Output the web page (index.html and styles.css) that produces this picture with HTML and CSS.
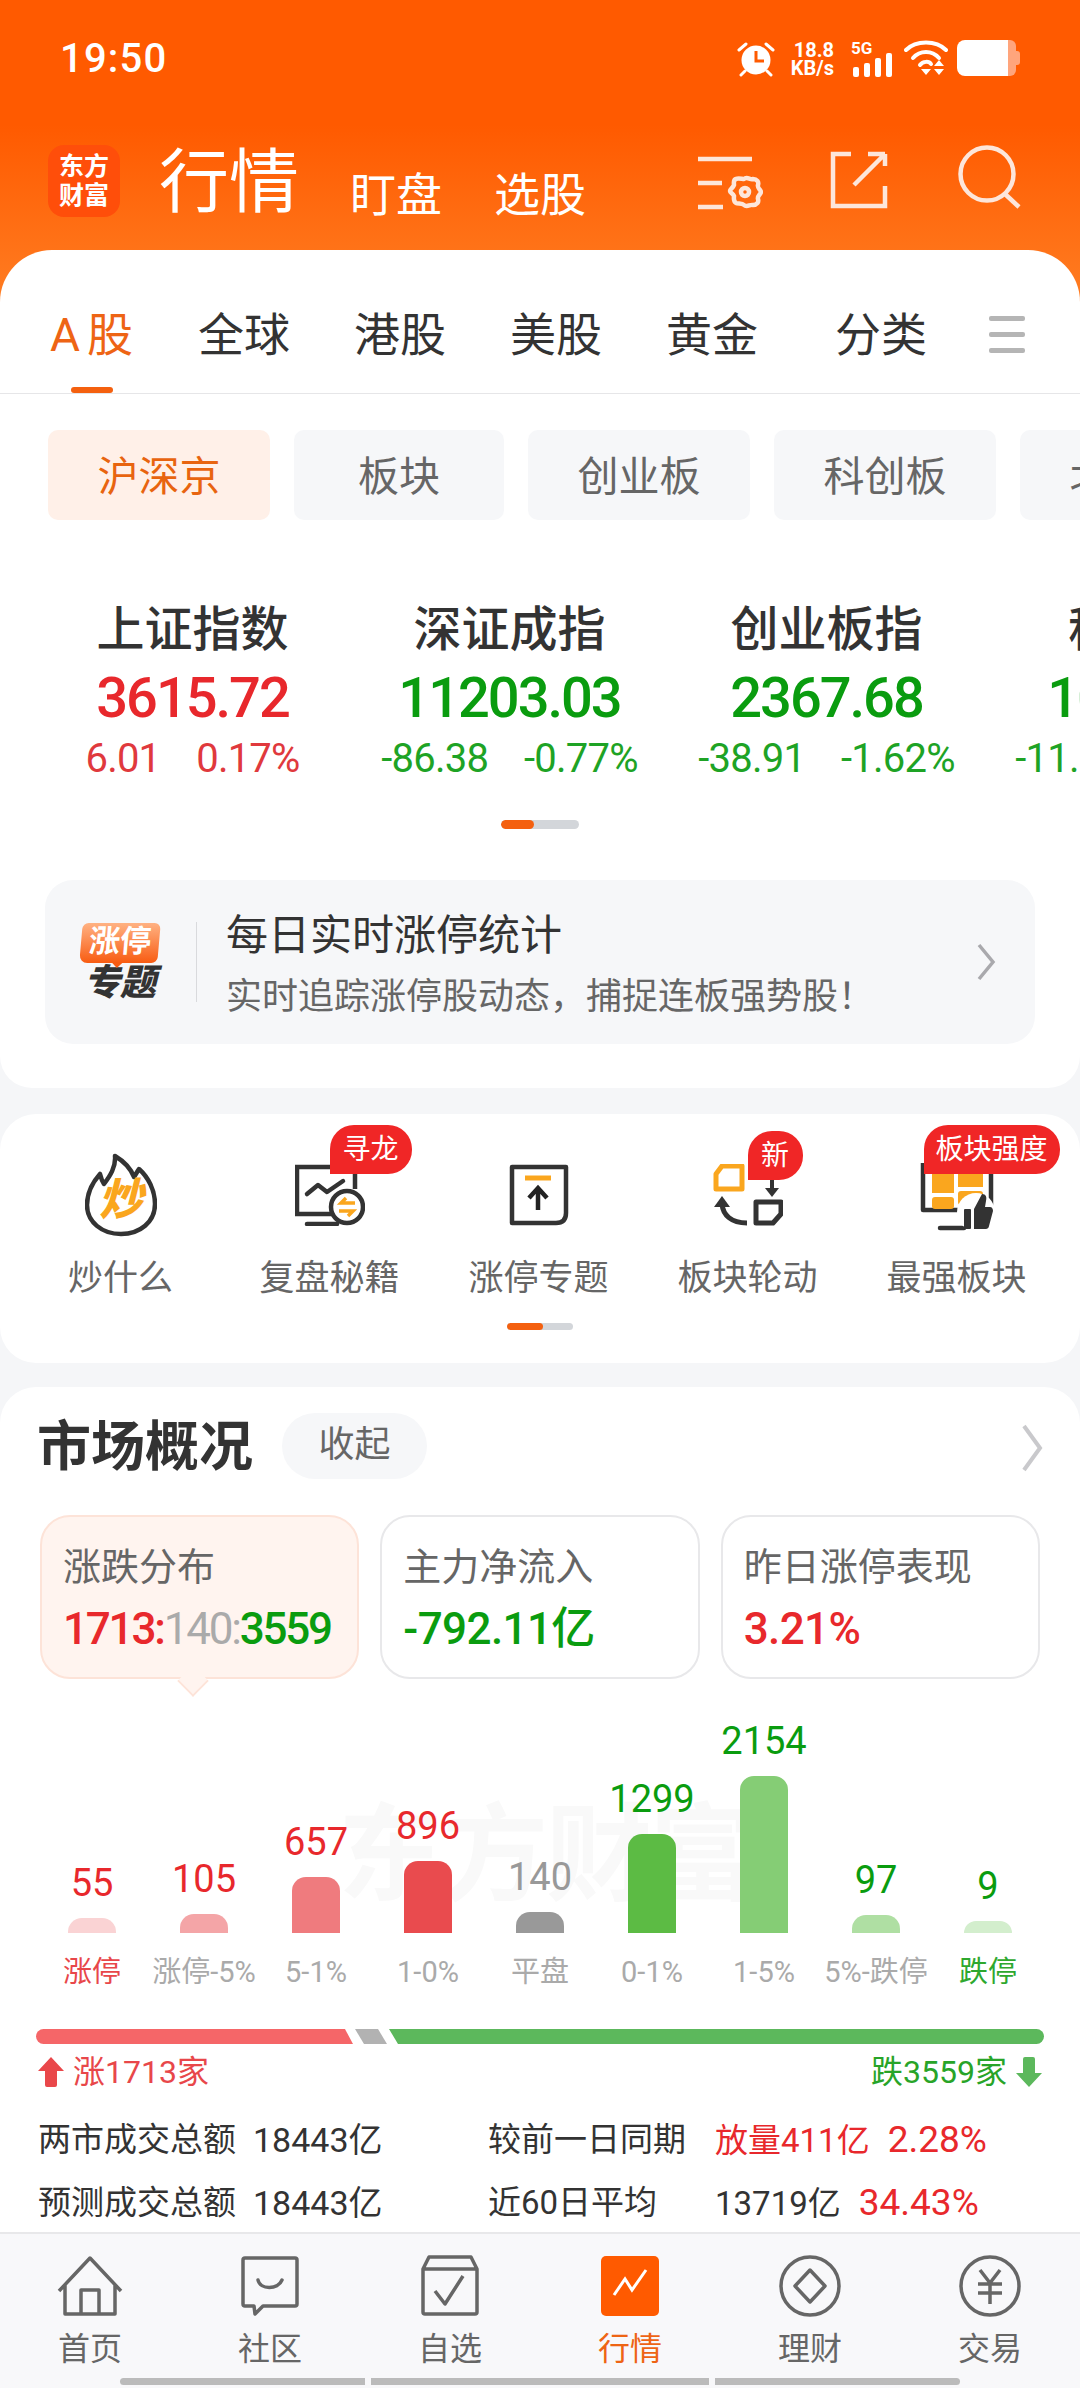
FILE: index.html

```html
<!DOCTYPE html>
<html lang="zh-CN">
<head>
  <meta charset="UTF-8">
  <title>行情</title>
  <link rel="stylesheet" href="styles.css">
</head>
<body>
<div class="app">
  <div class="main">
    <header class="head">
      <div class="status">
        <span class="time">19:50</span>
        <div class="status-right">
          <svg class="ic-alarm" width="38" height="36" viewBox="0 0 38 36">
            <circle cx="19" cy="19" r="14.5" fill="#fff"/>
            <path d="M19 10v10h8" fill="none" stroke="#ff5a00" stroke-width="3"/>
            <path d="M2 9l7-6M36 9l-7-6M8 30l-4 4M30 30l4 4" stroke="#fff" stroke-width="3" stroke-linecap="round"/>
          </svg>
          <div class="speed"><span>18.8</span><span>KB/s</span></div>
          <div class="signal">
            <span class="five-g">5G</span>
            <svg width="42" height="24" viewBox="0 0 42 24" fill="#fff">
              <rect x="0" y="14" width="6" height="10" rx="2"/>
              <rect x="11" y="10" width="6" height="14" rx="2"/>
              <rect x="22" y="5" width="6" height="19" rx="2"/>
              <rect x="33" y="0" width="6" height="24" rx="2"/>
            </svg>
          </div>
          <svg width="44" height="36" viewBox="0 0 44 36" fill="none">
            <path d="M2 10C12 0 32 0 42 10" stroke="#fff" stroke-width="4" stroke-linecap="round"/>
            <path d="M9 18C16 10 28 10 35 18" stroke="#fff" stroke-width="4" stroke-linecap="round"/>
            <path d="M16 25C19 21 25 21 27 24" stroke="#fff" stroke-width="4" stroke-linecap="round"/>
            <path d="M17 29h10l-5 6zM35 20l5 6h-10zM30 29h10l-5 6z" fill="#fff"/>
          </svg>
          <div class="battery"><span class="battery-fill"></span><span class="battery-rest"></span><span class="battery-nub"></span></div>
        </div>
      </div>
      <div class="toolbar">
        <div class="logo"><span>东方</span><span>财富</span></div>
        <span class="title">行情</span>
        <span class="subtitle">盯盘</span>
        <span class="subtitle">选股</span>
        <div class="tools">
          <svg class="tool-set" width="66" height="58" viewBox="0 0 66 58" fill="none" stroke="#fde6da" stroke-width="4.5">
            <path d="M1 4h54M1 28h24M1 52h25"/>
            <path d="M47 24c3-3 6 1 9 0 4 0 6 3 5 6-1 3 3 5 3 7s-4 4-3 7c1 3-1 6-5 6-3-1-6 3-9 0-2-2-6-1-8-2-3-2-2-5-2-7-1-3-4-3-4-5s3-3 4-6c0-2-1-5 2-6 2-1 6 0 8 0z" stroke-linejoin="round"/>
            <circle cx="48" cy="37" r="4"/>
          </svg>
          <svg class="tool-share" width="58" height="58" viewBox="0 0 58 58" fill="none" stroke="#fde6da" stroke-width="4.5">
            <path d="M21 3H3v52h52V35M55 3v12M38 3h17M55 3L24 34"/>
          </svg>
          <svg width="64" height="64" viewBox="0 0 64 64" fill="none" stroke="#fde6da" stroke-width="4.5">
            <circle cx="29" cy="29" r="26.5"/>
            <path d="M47 49l14 13"/>
          </svg>
        </div>
      </div>
    </header>

    <section class="panel">
      <nav class="tabs">
        <span class="tab tab-a on">A股</span>
        <span class="tab">全球</span>
        <span class="tab">港股</span>
        <span class="tab">美股</span>
        <span class="tab">黄金</span>
        <span class="tab tab-sort">分类</span>
        <span class="tab-menu"><i></i><i></i><i></i></span>
      </nav>
      <div class="chips">
        <span class="chip on">沪深京</span>
        <span class="chip chip-s">板块</span>
        <span class="chip">创业板</span>
        <span class="chip">科创板</span>
        <span class="chip">北交所</span>
      </div>
      <div class="indexes">
        <div class="index up">
          <div class="index-name">上证指数</div>
          <div class="index-val">3615.72</div>
          <div class="index-sub"><span>6.01</span><span>0.17%</span></div>
        </div>
        <div class="index down">
          <div class="index-name">深证成指</div>
          <div class="index-val">11203.03</div>
          <div class="index-sub"><span>-86.38</span><span>-0.77%</span></div>
        </div>
        <div class="index down">
          <div class="index-name">创业板指</div>
          <div class="index-val">2367.68</div>
          <div class="index-sub"><span>-38.91</span><span>-1.62%</span></div>
        </div>
        <div class="index down">
          <div class="index-name">科创50</div>
          <div class="index-val">1042.36</div>
          <div class="index-sub"><span>-11.25</span><span>-1.07%</span></div>
        </div>
      </div>
      <div class="dots dots-index"><i></i></div>
      <div class="banner">
        <div class="banner-logo">
          <span class="banner-tag">涨停</span>
          <span class="banner-word">专题</span>
        </div>
        <div class="banner-text">
          <div class="banner-title">每日实时涨停统计</div>
          <div class="banner-sub">实时追踪涨停股动态，捕捉连板强势股！</div>
        </div>
        <svg class="banner-arrow" width="20" height="40" viewBox="0 0 20 40" fill="none" stroke="#a9a9ad" stroke-width="3.5"><path d="M3 3l14 17L3 37"/></svg>
      </div>
    </section>

    <section class="card shortcuts">
      <div class="grid5">
        <div class="short">
          <div class="short-ic">
            <svg width="72" height="84" viewBox="0 0 72 84" fill="none" stroke="#333" stroke-width="4.5" stroke-linejoin="round">
              <path d="M30 3c10 6 16 13 19 21 2-3 3-5 5-8 9 8 16 21 16 35 0 18-15 30-34 30S2 69 2 52c0-11 5-22 13-31 1 4 2 7 4 10 6-8 12-17 11-28z"/>
            </svg>
            <span class="chao">炒</span>
          </div>
          <span class="short-name">炒什么</span>
        </div>
        <div class="short">
          <div class="short-ic">
            <svg width="70" height="62" viewBox="0 0 70 62" fill="none">
              <path d="M40 3H2v47h38M60 3v22" stroke="#333" stroke-width="4.5"/>
              <path d="M12 60h30" stroke="#333" stroke-width="4.5" stroke-linecap="round"/>
              <path d="M12 30l11-9 9 7 16-11" stroke="#333" stroke-width="4.5" stroke-linecap="round" stroke-linejoin="round"/>
              <circle cx="52" cy="43" r="16" fill="#fff" stroke="#333" stroke-width="4.5"/>
              <path d="M60 39H46l5-5M44 47h14l-5 5" stroke="#faa61e" stroke-width="3.5"/>
            </svg>
            <span class="badge badge-long">寻龙</span>
          </div>
          <span class="short-name">复盘秘籍</span>
        </div>
        <div class="short">
          <div class="short-ic">
            <svg width="60" height="62" viewBox="0 0 60 62" fill="none">
              <path d="M3 3h54v46q0 10-10 10H3z" stroke="#333" stroke-width="4.5" stroke-linejoin="round"/>
              <path d="M16 14h26" stroke="#faa61e" stroke-width="5"/>
              <path d="M29 46V26M20 34l9-10 9 10" stroke="#222" stroke-width="4.5"/>
            </svg>
          </div>
          <span class="short-name">涨停专题</span>
        </div>
        <div class="short">
          <div class="short-ic">
            <svg width="70" height="62" viewBox="0 0 70 62" fill="none">
              <path d="M3 25V10l6-8h20v23z" stroke="#faa61e" stroke-width="5" stroke-linejoin="round"/>
              <path d="M43 38h25v12l-8 9H43z" stroke="#333" stroke-width="5" stroke-linejoin="round"/>
              <path d="M59 16v10" stroke="#333" stroke-width="4"/>
              <path d="M52 24h14l-7 9z" fill="#333"/>
              <path d="M9 40c1 11 9 19 25 19" stroke="#333" stroke-width="5"/>
              <path d="M1 43l8-11 8 11z" fill="#333"/>
            </svg>
            <span class="badge badge-new">新</span>
          </div>
          <span class="short-name">板块轮动</span>
        </div>
        <div class="short">
          <div class="short-ic">
            <svg width="74" height="72" viewBox="0 0 74 72" fill="none">
              <path d="M3 4v47h68V4" stroke="#333" stroke-width="4.5" stroke-linejoin="round"/>
              <path d="M20 69h24" stroke="#333" stroke-width="4.5" stroke-linecap="round"/>
              <rect x="12" y="14" width="22" height="20" fill="#faa61e"/>
              <rect x="38" y="14" width="25" height="14" fill="#faa61e"/>
              <rect x="12" y="38" width="22" height="12" rx="3" fill="#faa61e"/>
              <rect x="38" y="32" width="25" height="14" rx="3" fill="#faa61e"/>
              <circle cx="56" cy="53" r="19" fill="#fff"/>
              <rect x="44" y="50" width="7" height="20" rx="1" fill="#333"/>
              <path d="M54 50l8-15c4 0 5 3 4 7l-1 6h5c2 0 3 2 3 4l-4 15c0 2-2 3-3 3H54z" fill="#333"/>
            </svg>
            <span class="badge badge-wide">板块强度</span>
          </div>
          <span class="short-name">最强板块</span>
        </div>
      </div>
      <div class="dots dots-short"><i></i></div>
    </section>

    <section class="card market">
      <div class="market-head">
        <h2 class="market-title">市场概况</h2>
        <span class="fold">收起</span>
        <svg class="market-arrow" width="22" height="50" viewBox="0 0 22 50" fill="none" stroke="#c9c9cc" stroke-width="4"><path d="M3 3l16 22L3 47"/></svg>
      </div>
      <div class="stats">
        <div class="stat on">
          <div class="stat-name">涨跌分布</div>
          <div class="stat-val stat-mix"><span class="red">1713:</span><span class="gray">140:</span><span class="green">3559</span></div>
        </div>
        <div class="stat">
          <div class="stat-name">主力净流入</div>
          <div class="stat-val green">-792.11亿</div>
        </div>
        <div class="stat">
          <div class="stat-name">昨日涨停表现</div>
          <div class="stat-val red">3.21%</div>
        </div>
      </div>

      <div class="chart">
        <span class="watermark">东方财富</span>
        <div class="col"><span class="col-val red">55</span><div class="bar" style="height:15px;background:#fad3d4"></div><span class="col-name red2">涨停</span></div>
        <div class="col"><span class="col-val red">105</span><div class="bar" style="height:19px;background:#f4a5a7"></div><span class="col-name">涨停-5%</span></div>
        <div class="col"><span class="col-val red">657</span><div class="bar" style="height:56px;background:#ef7b7e"></div><span class="col-name">5-1%</span></div>
        <div class="col"><span class="col-val red">896</span><div class="bar" style="height:72px;background:#e94b4e"></div><span class="col-name">1-0%</span></div>
        <div class="col"><span class="col-val gray">140</span><div class="bar" style="height:21px;background:#999"></div><span class="col-name">平盘</span></div>
        <div class="col"><span class="col-val green">1299</span><div class="bar" style="height:99px;background:#5cbb44"></div><span class="col-name">0-1%</span></div>
        <div class="col"><span class="col-val green">2154</span><div class="bar" style="height:157px;background:#85cd75"></div><span class="col-name">1-5%</span></div>
        <div class="col"><span class="col-val green">97</span><div class="bar" style="height:18px;background:#afdfa3"></div><span class="col-name">5%-跌停</span></div>
        <div class="col"><span class="col-val green">9</span><div class="bar" style="height:12px;background:#d3eecd"></div><span class="col-name green2">跌停</span></div>
      </div>

      <div class="ratio">
        <i class="ratio-up"></i><i class="ratio-flat"></i><i class="ratio-down"></i>
      </div>
      <div class="ratio-text">
        <span class="ratio-l red">
          <svg width="26" height="30" viewBox="0 0 26 30" fill="#e9474a"><path d="M13 0l13 14h-7v14a2 2 0 0 1-2 2H9a2 2 0 0 1-2-2V14H0z"/></svg>
          涨1713家
        </span>
        <span class="ratio-r green">
          跌3559家
          <svg width="26" height="30" viewBox="0 0 26 30" fill="#5cb85c"><path d="M13 30l13-14h-7V2a2 2 0 0 0-2-2H9a2 2 0 0 0-2 2v14H0z"/></svg>
        </span>
      </div>
      <div class="turnover">
        <span>两市成交总额</span><span>18443亿</span><span>较前一日同期</span><span class="red turn-pair"><b>放量411亿</b><b>2.28%</b></span>
        <span>预测成交总额</span><span>18443亿</span><span>近60日平均</span><span class="turn-pair"><b>13719亿</b><b class="red">34.43%</b></span>
      </div>
    </section>
  </div>

  <footer class="nav">
    <div class="nav-row">
      <div class="nav-item">
        <svg width="66" height="62" viewBox="0 0 66 62" fill="none" stroke="#666" stroke-width="3.5" stroke-linejoin="round"><path d="M2 36L33 3l31 33M8 30v29h50V30M24 59V35h18v24"/></svg>
        <span>首页</span>
      </div>
      <div class="nav-item">
        <svg width="60" height="62" viewBox="0 0 60 62" fill="none" stroke="#666" stroke-width="3.5" stroke-linejoin="round"><path d="M5 3h50a2 2 0 0 1 2 2v44a2 2 0 0 1-2 2H23l-8 8-1-8H5a2 2 0 0 1-2-2V5a2 2 0 0 1 2-2z"/><path d="M18 25c2 10 20 10 24 0" stroke-linecap="round"/></svg>
        <span>社区</span>
      </div>
      <div class="nav-item">
        <svg width="60" height="62" viewBox="0 0 60 62" fill="none" stroke="#666" stroke-width="3.5" stroke-linejoin="round"><path d="M3 14L9 2h42l6 12v43a2 2 0 0 1-2 2H5a2 2 0 0 1-2-2zM3 14h54M15 36l10 13 18-28"/></svg>
        <span>自选</span>
      </div>
      <div class="nav-item on">
        <svg width="58" height="62" viewBox="0 0 58 62"><rect width="58" height="60" y="1" rx="5" fill="#ff5a00"/><path d="M13 40l11-16 7 11 14-20" fill="none" stroke="#fff" stroke-width="3"/></svg>
        <span>行情</span>
      </div>
      <div class="nav-item">
        <svg width="62" height="62" viewBox="0 0 62 62" fill="none" stroke="#666" stroke-width="3.5" stroke-linejoin="round"><circle cx="31" cy="31" r="29"/><path d="M31 15l15 16-15 16-15-16z"/></svg>
        <span>理财</span>
      </div>
      <div class="nav-item">
        <svg width="62" height="62" viewBox="0 0 62 62" fill="none" stroke="#666" stroke-width="3.5"><circle cx="31" cy="31" r="29"/><path d="M21 15l10 13 10-13M19 29h24M19 38h24M31 28v21"/></svg>
        <span>交易</span>
      </div>
    </div>
    <div class="home-bars"><i></i><i></i><i></i></div>
  </footer>
</div>
</body>
</html>
```

FILE: styles.css

```css
* {
  box-sizing: border-box;
}
html, body {
  margin: 0;
  padding: 0;
}
body {
  width: 1080px;
  height: 2388px;
  overflow: hidden;
  font-family: Roboto, "Noto Sans CJK SC", sans-serif;
  color: #333;
  background: #f5f6f8;
}
i {
  display: block;
}
.red { color: #e8282c; }
.green { color: #0a9c0f; }
.gray { color: #999; }

.app {
  height: 2388px;
  display: flex;
  flex-direction: column;
}
.main {
  flex: 1;
  min-height: 0;
  overflow: hidden;
}

/* header */
.head {
  height: 302px;
  background: linear-gradient(180deg, #ff5a00 0, #ff5a00 125px, #ff7d22 302px);
  color: #fff;
}
.status {
  height: 116px;
  padding: 40px 60px 0 60px;
  display: flex;
  justify-content: space-between;
  align-items: flex-start;
}
.time {
  font-size: 40px;
  line-height: 38px;
  font-weight: 500;
  letter-spacing: 1.2px;
}
.status-right {
  display: flex;
  align-items: flex-start;
  margin-right: 0;
}
.ic-alarm {
  margin: 1px 13px 0 0;
}
.speed {
  display: flex;
  flex-direction: column;
  align-items: flex-end;
  width: 46px;
  margin-top: 1px;
  font-size: 20px;
  line-height: 18px;
  font-weight: 700;
  white-space: nowrap;
}
.signal {
  width: 42px;
  margin: 1px 11px 0 17px;
  position: relative;
  height: 36px;
}
.five-g {
  position: absolute;
  left: 0;
  top: 0;
  font-size: 17px;
  line-height: 15px;
  font-weight: 700;
}
.signal svg {
  position: absolute;
  left: 2px;
  top: 12px;
}
.battery {
  display: flex;
  align-items: center;
  margin-left: 9px;
  height: 36px;
}
.battery-fill {
  width: 51px;
  height: 36px;
  background: #fff;
  border-radius: 8px 0 0 8px;
}
.battery-rest {
  width: 8px;
  height: 36px;
  background: #ffa57c;
  border-radius: 0 6px 6px 0;
}
.battery-nub {
  width: 4px;
  height: 14px;
  background: #ffa57c;
  border-radius: 0 3px 3px 0;
}

.toolbar {
  display: flex;
  align-items: flex-start;
  padding: 29px 58px 0 48px;
}
.logo {
  width: 72px;
  height: 72px;
  border-radius: 16px;
  background: #ff4e0a;
  display: flex;
  flex-direction: column;
  align-items: center;
  justify-content: center;
  font-size: 25px;
  line-height: 29px;
  font-weight: 700;
}
.title {
  margin-left: 39px;
  font-size: 70px;
  line-height: 76px;
  margin-top: 0;
}
.subtitle {
  font-size: 46px;
  line-height: 54px;
  margin: 23px 0 0 52px;
}
.title + .subtitle {
  margin-left: 51px;
}
.tools {
  margin-left: auto;
  display: flex;
  align-items: flex-start;
}
.tool-set {
  margin: 10px 67px 0 0;
}
.tool-share {
  margin: 6px 70px 0 0;
}

/* main white panel */
.panel {
  margin-top: -52px;
  height: 838px;
  background: #fff;
  border-radius: 52px 52px 32px 32px;
  position: relative;
}
.tabs {
  height: 144px;
  padding: 0 0 0 50px;
  border-bottom: 1px solid #e6e6e8;
  display: flex;
  align-items: flex-start;
}
.tab {
  font-size: 46px;
  line-height: 56px;
  margin: 57px 64px 0 0;
  color: #333;
  position: relative;
  white-space: nowrap;
}
.tab-a {
  width: 84px;
  letter-spacing: 7px;
}
.tab.on {
  color: #ee6414;
}
.tab.on::after {
  content: "";
  position: absolute;
  left: 21px;
  bottom: -30px;
  width: 42px;
  height: 6px;
  border-radius: 3px;
  background: #f4600f;
}
.tab-sort {
  margin-left: 13px;
  margin-right: 62px;
}
.tab-menu {
  margin-top: 66px;
}
.tab-menu i {
  width: 36px;
  height: 5px;
  border-radius: 2px;
  background: #b5b5b5;
  margin-bottom: 11px;
}

.chips {
  display: flex;
  gap: 24px;
  padding: 36px 0 0 48px;
  overflow: hidden;
}
.chip {
  flex: none;
  width: 222px;
  height: 90px;
  line-height: 94px;
  text-align: center;
  background: #f6f7f9;
  border-radius: 10px;
  font-size: 41px;
  color: #666;
}
.chip-s {
  width: 210px;
}
.chip.on {
  background: #fff0e8;
  color: #e8640f;
}

.indexes {
  display: flex;
  padding: 80px 0 0 34px;
  overflow: hidden;
}
.index {
  flex: none;
  width: 317px;
  text-align: center;
  white-space: nowrap;
}
.index-name {
  font-size: 48px;
  line-height: 60px;
  font-weight: 500;
  color: #333;
}
.index-val {
  font-size: 56px;
  line-height: 70px;
  margin-top: 3px;
  font-weight: 500;
  letter-spacing: -2px;
}
.index-sub {
  display: flex;
  justify-content: center;
  gap: 36px;
  font-size: 40px;
  line-height: 46px;
  margin-top: 3px;
  letter-spacing: -0.8px;
}
.up .index-val { color: #e8282c; }
.up .index-sub { color: #e0393d; }
.down .index-val { color: #0a9c0f; }
.down .index-sub { color: #1ea325; }

.dots {
  background: #d3d6da;
  border-radius: 5px;
  overflow: hidden;
}
.dots i {
  height: 100%;
  background: #f4600f;
  border-radius: 5px;
}
.dots-index {
  width: 78px;
  height: 9px;
  margin: 38px 0 0 501px;
}
.dots-index i {
  width: 33px;
}
.dots-short {
  width: 66px;
  height: 7px;
  margin: 20px 0 0 507px;
}
.dots-short i {
  width: 36px;
}

.banner {
  margin: 51px 45px 0;
  height: 164px;
  background: #f6f7f9;
  border-radius: 28px;
  display: flex;
  align-items: center;
  padding-left: 35px;
}
.banner-logo {
  width: 80px;
  display: flex;
  flex-direction: column;
  align-items: center;
}
.banner-tag {
  width: 78px;
  height: 40px;
  line-height: 38px;
  text-align: center;
  font-size: 31px;
  font-weight: 700;
  color: #fff;
  border-radius: 6px 6px 6px 8px;
  background: linear-gradient(180deg, #ffb283, #f85c12);
  transform: skewX(-5deg);
  position: relative;
}
.banner-tag::after {
  content: "";
  position: absolute;
  left: 32px;
  bottom: -5px;
  border: 6px solid transparent;
  border-bottom: 0;
  border-top-color: #f85c12;
}
.banner-word {
  font-size: 36px;
  line-height: 36px;
  font-weight: 900;
  font-style: italic;
  color: #333;
  margin-top: 2px;
}
.banner-text {
  margin-left: 36px;
  padding-left: 29px;
  border-left: 1.5px solid #d9dadd;
  height: 80px;
  display: flex;
  flex-direction: column;
  justify-content: center;
}
.banner-title {
  font-size: 42px;
  line-height: 56px;
  color: #333;
  margin-top: -8px;
}
.banner-sub {
  font-size: 36px;
  line-height: 48px;
  color: #666;
  margin-top: 9px;
  margin-bottom: -13px;
  white-space: nowrap;
}
.banner-arrow {
  margin-left: auto;
  margin-right: 39px;
}

/* white cards */
.card {
  background: #fff;
  border-radius: 36px;
}
.shortcuts {
  margin-top: 26px;
  height: 249px;
  padding-top: 36px;
}
.grid5 {
  display: flex;
  padding-left: 16px;
}
.short {
  width: 209px;
  display: flex;
  flex-direction: column;
  align-items: center;
}
.short-ic {
  position: relative;
  height: 90px;
  width: 90px;
  display: flex;
  align-items: center;
  justify-content: center;
  white-space: nowrap;
}
.chao {
  position: absolute;
  left: 19px;
  top: 25px;
  width: 52px;
  text-align: center;
  font-size: 44px;
  line-height: 50px;
  font-weight: 900;
  font-style: italic;
  color: #faa61e;
}
.badge {
  position: absolute;
  background: #f02626;
  color: #fff;
  font-size: 28px;
  line-height: 49px;
  height: 49px;
  text-align: center;
  border-radius: 24px 24px 24px 0;
}
.badge-long {
  left: 45px;
  top: -25px;
  width: 82px;
}
.badge-new {
  left: 45px;
  top: -19px;
  width: 55px;
}
.badge-wide {
  left: 12px;
  top: -25px;
  width: 136px;
}
.short-name {
  font-size: 35px;
  line-height: 48px;
  color: #666;
  margin-top: 15px;
}

.market {
  margin-top: 24px;
  height: 900px;
  padding-top: 28px;
  border-radius: 36px 36px 0 0;
}
.market-head {
  display: flex;
  align-items: center;
  height: 66px;
  padding: 0 37px 0 37px;
}
.market-title {
  margin: 0;
  font-size: 54px;
  line-height: 66px;
  font-weight: 700;
  color: #333;
}
.fold {
  margin: -5px 0 0 29px;
  width: 145px;
  height: 66px;
  line-height: 64px;
  text-align: center;
  border-radius: 33px;
  background: #f6f7f9;
  font-size: 36px;
  color: #666;
}
.market-arrow {
  margin-left: auto;
}

.stats {
  display: flex;
  gap: 21px;
  margin: 34px 40px 0;
}
.stat {
  flex: 1;
  height: 164px;
  border: 2px solid #e8e8ea;
  border-radius: 30px;
  padding: 27px 0 0 21px;
  position: relative;
  white-space: nowrap;
}
.stat.on {
  background: #fff4ef;
  border-color: #fde3d8;
}
.stat.on::after {
  content: "";
  position: absolute;
  left: 138px;
  bottom: -17px;
  width: 24px;
  height: 24px;
  background: #fff4ef;
  border-right: 2px solid #fde3d8;
  border-bottom: 2px solid #fde3d8;
  transform: rotate(45deg) scale(.85);
}
.stat-name {
  font-size: 38px;
  line-height: 46px;
  color: #666;
}
.stat-val {
  font-size: 44px;
  line-height: 56px;
  margin-top: 11px;
  font-weight: 500;
  letter-spacing: -0.6px;
}
.stat-mix {
  letter-spacing: -2.2px;
}
.stat-val .gray {
  font-weight: 400;
  color: #aaa;
}

.chart {
  position: relative;
  height: 288px;
  margin-top: 22px;
  padding: 0 36px;
  display: flex;
  align-items: flex-end;
  justify-content: center;
}
.watermark {
  position: absolute;
  left: 338px;
  top: 100px;
  font-size: 106px;
  line-height: 110px;
  letter-spacing: -2px;
  font-weight: 700;
  color: #f9f9f9;
  white-space: nowrap;
}
.col {
  position: relative;
  flex: 0 0 112px;
  display: flex;
  flex-direction: column;
  align-items: center;
  white-space: nowrap;
}
.col-val {
  font-size: 38px;
  line-height: 44px;
  margin-bottom: 13px;
}
.bar {
  width: 48px;
  border-radius: 14px 14px 0 0;
}
.col-name {
  font-size: 29px;
  line-height: 36px;
  margin-top: 21px;
  margin-bottom: -1px;
  color: #aaa;
}
.red2 { color: #e8474a; }
.green2 { color: #2ea82e; }

.ratio {
  display: flex;
  gap: 2px;
  margin: 40px 36px 0;
  height: 15px;
}
.ratio-up {
  width: 317px;
  background: #f56668;
  border-radius: 8px 0 0 8px;
  clip-path: polygon(0 0, 309px 0, 100% 100%, 0 100%);
}
.ratio-flat {
  width: 32px;
  background: #b2b2b2;
  clip-path: polygon(0 0, 23px 0, 100% 100%, 9px 100%);
}
.ratio-down {
  flex: 1;
  background: #5cb85c;
  border-radius: 0 8px 8px 0;
  clip-path: polygon(0 0, 100% 0, 100% 100%, 9px 100%);
}
.ratio-text {
  display: flex;
  justify-content: space-between;
  padding: 0 38px;
  margin-top: 8px;
  font-size: 32px;
  line-height: 40px;
}
.ratio-l, .ratio-r {
  display: flex;
  align-items: center;
  gap: 9px;
}
.ratio-l { color: #e8474a; }
.ratio-r { color: #28a428; }

.turnover {
  display: grid;
  grid-template-columns: 215px 235px 227px 1fr;
  padding: 17px 38px 0;
  font-size: 32px;
  line-height: 62px;
  color: #333;
  white-space: nowrap;
}
.turnover span {
  font-size: 33px;
}
.turnover span:nth-child(even) {
  font-size: 34px;
}
.turn-pair {
  display: flex;
  gap: 18px;
  align-items: baseline;
}
.turn-pair b {
  font-weight: 400;
  font-size: 33px;
}
.turn-pair b:last-child {
  font-size: 37px;
}

/* bottom nav */
.nav {
  flex: none;
  height: 156px;
  background: #f8f8fa;
  border-top: 2px solid #e8e8ea;
  position: relative;
}
.nav-row {
  display: flex;
  padding-top: 21px;
}
.nav-item {
  width: 180px;
  display: flex;
  flex-direction: column;
  align-items: center;
  font-size: 32px;
  line-height: 40px;
  color: #666;
}
.nav-item svg {
  display: block;
  margin-bottom: 12px;
}
.nav-item.on {
  color: #ee6414;
}
.home-bars {
  position: absolute;
  left: 120px;
  bottom: 3px;
  display: flex;
  gap: 6px;
}
.home-bars i {
  height: 7px;
  background: #bbb;
  width: 338px;
}
.home-bars i:first-child {
  width: 245px;
  border-radius: 4px 0 0 4px;
}
.home-bars i:last-child {
  width: 245px;
  border-radius: 0 4px 4px 0;
}
```
